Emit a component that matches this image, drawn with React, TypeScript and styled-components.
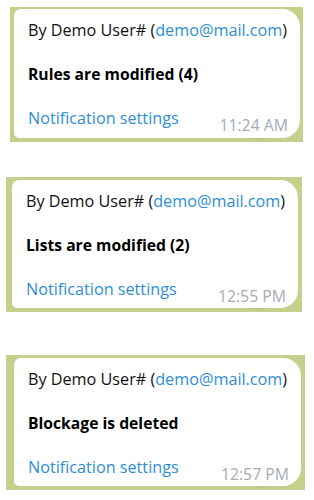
import React from "react";
import styled, { createGlobalStyle } from "styled-components";

const Global = createGlobalStyle`
  html, body { margin: 0; padding: 0; background: #ffffff; }
  body { font-family: "Open Sans", "Noto Sans", sans-serif; }
`;

const Page = styled.div`
  width: 314px;
  height: 500px;
  display: flex;
  flex-direction: column;
  background: #ffffff;
  overflow: hidden;
`;

const Frame = styled.div<{ $top: number; $left: number; $width: number; $pad: string }>`
  margin-top: ${(p) => p.$top}px;
  margin-left: ${(p) => p.$left}px;
  width: ${(p) => p.$width}px;
  height: 135px;
  box-sizing: border-box;
  padding: ${(p) => p.$pad};
  background-color: #c6cf8c;
  background-image: radial-gradient(circle at 20% 30%, rgba(255,255,255,0.08) 0 20px, transparent 21px),
    radial-gradient(circle at 85% 80%, rgba(0,0,0,0.03) 0 25px, transparent 26px);
  display: flex;
`;

const Bubble = styled.div`
  flex: 1;
  background: #ffffff;
  border-radius: 7px 18px 18px 5px;
  padding: 10px 12px 9px 14px;
  display: flex;
  flex-direction: column;
  gap: 22px;
  font-size: 16.2px;
  line-height: 22px;
  color: #111111;
`;

const Line = styled.div`
  white-space: nowrap;
`;

const Title = styled.div`
  font-weight: 700;
  font-size: 15.7px;
  color: #000000;
  white-space: nowrap;
`;

const Link = styled.span`
  color: #2d8ed6;
`;

const Footer = styled.div`
  display: flex;
  justify-content: space-between;
  align-items: flex-end;
`;

const Time = styled.span`
  font-size: 15.8px;
  line-height: 22px;
  color: #a4acb4;
  margin-bottom: -7px;
`;

type Msg = {
  title: string;
  time: string;
  top: number;
  left: number;
  width: number;
  pad: string;
};

const messages: Msg[] = [
  { title: "Rules are modified (4)", time: "11:24 AM", top: 7, left: 10, width: 293, pad: "2px 3px 4px 4px" },
  { title: "Lists are modified (2)", time: "12:55 PM", top: 35, left: 6, width: 296, pad: "3px 4px 4px 6px" },
  { title: "Blockage is deleted", time: "12:57 PM", top: 43, left: 6, width: 299, pad: "3px 4px 4px 8px" },
];

export default function App() {
  return (
    <>
      <Global />
      <Page>
        {messages.map((m) => (
          <Frame key={m.time} $top={m.top} $left={m.left} $width={m.width} $pad={m.pad}>
            <Bubble>
              <Line>
                By Demo User# (<Link>demo@mail.com</Link>)
              </Line>
              <Title>{m.title}</Title>
              <Footer>
                <Link>Notification settings</Link>
                <Time>{m.time}</Time>
              </Footer>
            </Bubble>
          </Frame>
        ))}
      </Page>
    </>
  );
}
